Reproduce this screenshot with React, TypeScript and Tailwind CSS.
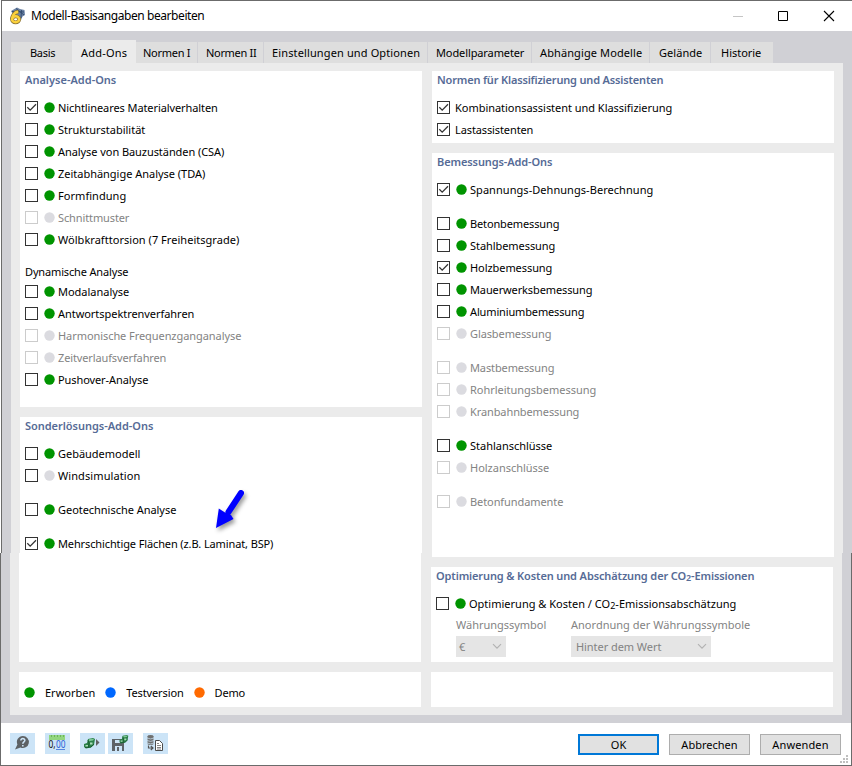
import { useLayoutEffect, useRef, type ReactNode } from "react";

/* Text whose tracking is adjusted so that it fills the given width. */
function T({ w, className = "", children }: { w: number; className?: string; children: ReactNode }) {
  const ref = useRef<HTMLSpanElement>(null);
  useLayoutEffect(() => {
    const el = ref.current;
    if (!el) return;
    el.style.letterSpacing = "0px";
    const n = (el.textContent ?? "").length;
    const natural = el.getBoundingClientRect().width;
    el.style.letterSpacing = `${(w - 0.7 - natural) / n}px`;
  }, [w]);
  return (
    <span ref={ref} className={`inline-block shrink-0 whitespace-nowrap ${className}`}>
      {children}
    </span>
  );
}

function Dot({ color }: { color: string }) {
  return (
    <svg width="11" height="11" viewBox="0 0 11 11" className="block shrink-0">
      <circle cx="5.5" cy="5.5" r="5.2" fill={color} />
    </svg>
  );
}

const GREEN = "#009400";
const GRAY = "#dbdbe0";

type Row = { label: ReactNode; w: number; checked?: boolean; off?: boolean; dot?: string | null; gap?: boolean };

function CheckRow({ label, w, checked, off, dot, gap }: Row) {
  const color = dot === undefined ? (off ? GRAY : GREEN) : dot;
  return (
    <label className={`flex h-[22px] items-start ${gap ? "mt-3" : ""}`}>
      <span
        className={`mt-1 block size-[13px] shrink-0 border bg-white ${off ? "border-[#cccccc]" : "border-[#333333]"}`}
      >
        {checked && (
          <svg width="11" height="11" viewBox="0 0 11 11" className="block">
            <path d="M1.3 5.3 4.2 8.2 10 2.3" fill="none" stroke="#333" strokeWidth="1.3" />
          </svg>
        )}
      </span>
      {color !== null && (
        <span className="mt-[5px] ml-[6px] shrink-0">
          <Dot color={color} />
        </span>
      )}
      <T w={w} className={`leading-[22px] ${color === null ? "ml-[5px]" : "ml-[3px]"} ${off ? "text-[#838383]" : ""}`}>
        {label}
      </T>
    </label>
  );
}

function Panel({ title, w, className, children }: { title: ReactNode; w: number; className: string; children: ReactNode }) {
  return (
    <section className={`w-[402px] bg-white pl-[5px] ${className}`}>
      <h2 className="h-[26px] font-semibold leading-[17px] text-[#566b96]">
        <T w={w}>{title}</T>
      </h2>
      {children}
    </section>
  );
}

const tabs = [
  { label: "Basis", w: 26, box: "w-[61px] pl-[19px]" },
  { label: "Add-Ons", w: 47, box: "w-[64px] pl-[9px]", active: true },
  { label: "Normen I", w: 48, box: "w-[62px] pl-[7px]" },
  { label: "Normen II", w: 51, box: "w-[66px] pl-[8px]" },
  { label: "Einstellungen und Optionen", w: 149, box: "w-[164px] pl-[8px]" },
  { label: "Modellparameter", w: 89, box: "w-[104px] pl-[8px]" },
  { label: "Abhängige Modelle", w: 103, box: "w-[118px] pl-[8px]" },
  { label: "Gelände", w: 44, box: "w-[61px] pl-[9px]" },
  { label: "Historie", w: 41, box: "w-[62px] pl-[10px]" },
];

const analysis: Row[] = [
  { label: "Nichtlineares Materialverhalten", w: 160.5, checked: true },
  { label: "Strukturstabilität", w: 88 },
  { label: "Analyse von Bauzuständen (CSA)", w: 167 },
  { label: "Zeitabhängige Analyse (TDA)", w: 148 },
  { label: "Formfindung", w: 69 },
  { label: "Schnittmuster", w: 72, off: true },
  { label: "Wölbkrafttorsion (7 Freiheitsgrade)", w: 182 },
];
const dynamic: Row[] = [
  { label: "Modalanalyse", w: 72 },
  { label: "Antwortspektrenverfahren", w: 137 },
  { label: "Harmonische Frequenzganganalyse", w: 184, off: true },
  { label: "Zeitverlaufsverfahren", w: 109, off: true },
  { label: "Pushover-Analyse", w: 91 },
];
const special: Row[] = [
  { label: "Gebäudemodell", w: 83 },
  { label: "Windsimulation", w: 83, dot: GRAY },
  { label: "Geotechnische Analyse", w: 119, gap: true },
  { label: "Mehrschichtige Flächen (z.B. Laminat, BSP)", w: 216, checked: true, gap: true },
];
const design: Row[] = [
  { label: "Spannungs-Dehnungs-Berechnung", w: 184, checked: true },
  { label: "Betonbemessung", w: 90, gap: true },
  { label: "Stahlbemessung", w: 86 },
  { label: "Holzbemessung", w: 83, checked: true },
  { label: "Mauerwerksbemessung", w: 123 },
  { label: "Aluminiumbemessung", w: 115 },
  { label: "Glasbemessung", w: 82, off: true },
  { label: "Mastbemessung", w: 85, off: true, gap: true },
  { label: "Rohrleitungsbemessung", w: 127, off: true },
  { label: "Kranbahnbemessung", w: 110, off: true },
  { label: "Stahlanschlüsse", w: 83, gap: true },
  { label: "Holzanschlüsse", w: 80, off: true },
  { label: "Betonfundamente", w: 94, off: true, gap: true },
];

const rows = (list: Row[]) => list.map((r, i) => <CheckRow key={i} {...r} />);
const co2 = (
  <>
    CO<span className="relative top-px text-[9px]">2</span>
  </>
);

function Select({ w, box, children }: { w: number; box: string; children: ReactNode }) {
  return (
    <div className={`flex h-[21px] items-center justify-between bg-[#e5e5e5] pr-[4px] text-[#838383] ${box}`}>
      <T w={w} className="pt-px">{children}</T>
      <svg width="10" height="7" viewBox="0 0 10 7">
        <path d="M1 1.2 5 5.2 9 1.2" fill="none" stroke="#b3b3b3" strokeWidth="1.2" />
      </svg>
    </div>
  );
}

function IconButton({ className = "", children }: { className?: string; children: ReactNode }) {
  return (
    <button className={`h-[21px] w-[25px] bg-[#cce4f7] ${className}`}>
      <svg width="25" height="21" viewBox="0 0 25 21" className="block">
        {children}
      </svg>
    </button>
  );
}

function GreenPart() {
  return (
    <>
      <path d="M0 6 3 5 4 1 9 0 11 1 10 7 7 9.5 2 10.5 0 9Z" fill="#2c8049" />
      <path d="M4.5 2 6 .8 10 1 9 2.5 5 3.2Z" fill="#7cc795" />
      <path d="M1.5 7H4V8.5H1.5ZM6 4.5H8.5V6.5H6Z" fill="#a9dcb9" />
      <path d="M4 2 5 5 4.5 9.5M1 9.6 7 9 10 6" fill="none" stroke="#165b2e" strokeWidth=".9" />
    </>
  );
}

export default function App() {
  return (
    <div className="relative h-[766px] w-[852px] overflow-hidden bg-[#d0d0d5] font-['Noto_Sans','Open_Sans',sans-serif] text-[11px] text-black">
      <header className="flex h-[31px] items-center border-t border-[#6b6b6b] bg-white">
        <svg width="17" height="18" viewBox="0 0 17 18" className="ml-[9px]">
          <path d="M2 4 8 .5 11 2 15.5 3 16 8 13.5 9.5 12 13 5 9Z" fill="#6c83a5" />
          <path d="M3 4.5 15 5M7 1.5 15 8M12.5 3 12 11" stroke="#2f486c" strokeWidth=".9" fill="none" />
          <path d="M9.5 4.8C5.5 5 3.2 8.4 3.2 12.2" fill="none" stroke="#8a7334" strokeWidth="4" />
          <ellipse cx="6.6" cy="12.3" rx="3.6" ry="3" fill="none" stroke="#8a7334" strokeWidth="3.8" />
          <path d="M9.2 4.9C5.5 5.2 3.2 8.4 3.2 12.2" fill="none" stroke="#fbd13c" strokeWidth="2.6" />
          <ellipse cx="6.6" cy="12.3" rx="3.6" ry="3" fill="none" stroke="#fbd13c" strokeWidth="2.4" />
        </svg>
        <T w={174} className="ml-[5px] text-[12px]">Modell-Basisangaben bearbeiten</T>
        <svg width="102" height="12" viewBox="0 0 102 12" className="mr-[17px] ml-auto">
          <path d="M0 6.5H10" stroke="#c5c5c5" />
          <path d="M45.5 1.5h9v9h-9z" fill="none" stroke="#000" />
          <path d="M91 1 101 11M101 1 91 11" stroke="#000" strokeWidth="1.1" />
        </svg>
      </header>

      <nav className="flex h-[32px] items-end pl-[11px] pt-[9px]">
        {tabs.map((t, i) => (
          <div
            key={t.label}
            className={`leading-[22px] ${t.box} ${
              t.active
                ? "h-[23px] bg-[#ebebeb] pt-[2px]"
                : i > 1 && i < 8
                  ? "h-[21px] border-r border-[#d0d0d5] bg-[#dedede]"
                  : "h-[21px] bg-[#dedede]"
            }`}
          >
            <T w={t.w}>{t.label}</T>
          </div>
        ))}
      </nav>

      <main className="ml-[11px] flex h-[652px] w-[832px] gap-[10px] bg-[#ebebeb] pl-[9px] pt-[8px]">
        <div className="flex flex-col gap-[10px]">
          <Panel title="Analyse-Add-Ons" w={92} className="h-[336px]">
            {rows(analysis)}
            <div className="h-[30px] pt-[10px] leading-[22px]">
              <T w={104}>Dynamische Analyse</T>
            </div>
            {rows(dynamic)}
          </Panel>
          <Panel title="Sonderlösungs-Add-Ons" w={129} className="h-[245px]">
            {rows(special)}
          </Panel>
          <section className="-ml-px flex h-[35px] w-[402px] items-center bg-white pt-[6px] pl-[5px]">
            <Dot color={GREEN} />
            <T w={51} className="ml-[10px] pt-px">Erworben</T>
            <span className="ml-[10px]"><Dot color="#0068ff" /></span>
            <T w={58} className="ml-[10px] pt-px">Testversion</T>
            <span className="ml-[10px]"><Dot color="#ff6a00" /></span>
            <T w={31} className="ml-[10px] pt-px">Demo</T>
          </section>
        </div>
        <div className="flex flex-col gap-[10px]">
          <Panel title="Normen für Klassifizierung und Assistenten" w={227} className="h-[72px]">
            <CheckRow label="Kombinationsassistent und Klassifizierung" w={218} checked dot={null} />
            <CheckRow label="Lastassistenten" w={79} checked dot={null} />
          </Panel>
          <Panel title="Bemessungs-Add-Ons" w={116} className="h-[404px]">
            {rows(design)}
          </Panel>
          <Panel title={<>Optimierung &amp; Kosten und Abschätzung der {co2}-Emissionen</>} w={319} className="-ml-px h-[95px]">
            <CheckRow label={<>Optimierung &amp; Kosten / {co2}-Emissionsabschätzung</>} w={268} />
            <div className="flex gap-[65px] pl-[20px]">
              <div className="w-[50px]">
                <div className="h-[21px] leading-[19px] text-[#838383]"><T w={91}>Währungssymbol</T></div>
                <Select w={6} box="w-[50px] pl-[3px]">€</Select>
              </div>
              <div>
                <div className="h-[21px] leading-[19px] text-[#838383]"><T w={180}>Anordnung der Währungssymbole</T></div>
                <Select w={86} box="w-[140px] pl-[5px]">Hinter dem Wert</Select>
              </div>
            </div>
          </Panel>
          <section className="-ml-px h-[35px] w-[402px] bg-white" />
        </div>
      </main>

      <footer className="mt-[8px] flex h-[43px] items-start border-b border-[#6b6b6b] bg-white pt-[10px] pl-[10px]">
        <IconButton>
          <path d="M12.8 3a6 6 0 1 1-2.3 11.5L5 16.5 7.4 11.5A6 6 0 0 1 12.8 3Z" fill="#5e6265" />
          <path d="M10.8 7.6C10.8 4.8 15 5 14.8 7.5 14.6 8.9 12.8 9 12.8 10.8M12.8 12V13.6" fill="none" stroke="#cce4f7" strokeWidth="1.6" />
        </IconButton>
        <IconButton className="ml-[10px]">
          <path d="M4 2h16v5H4z" fill="#92d67f" />
          <path d="M6.5 2v2M9.5 2v2M12.5 2v2M15.5 2v2M18.5 2v2" stroke="#6cb35c" />
          <text x="3.5" y="15.3" fontSize="10" fontFamily="Noto Sans" fill="#111" textLength="7" lengthAdjust="spacingAndGlyphs">0,</text>
          <text x="11" y="15.3" fontSize="10" fontFamily="Noto Sans" fill="#2860d8" textLength="9.5" lengthAdjust="spacingAndGlyphs">00</text>
          <path d="M11 16.5h9" stroke="#5785df" />
        </IconButton>
        <IconButton className="ml-[10px]">
          <g transform="translate(4 5)"><GreenPart /></g>
          <path d="M16 6 19.5 9.5 16 13Z" fill="#626262" />
        </IconButton>
        <IconButton className="ml-[3px]">
          <path d="M4 6H14L16 8V18H4Z" fill="#5d6267" />
          <path d="M7 7h5v3H7zM7 13h7v5H7z" fill="#cce4f7" />
          <path d="M9 14h2v4H9z" fill="#5d6267" />
          <g transform="translate(11.5 2) scale(.8)"><GreenPart /></g>
        </IconButton>
        <IconButton className="ml-[10px]">
          <path d="M4.5 3.2Q4.5 2 7.5 2T10.5 3.2V11Q10.5 12 7.5 12T4.5 11Z" fill="#707070" />
          <path d="M4 5Q7.5 6.8 11 5M4 7.5Q7.5 9.3 11 7.5M4 10Q7.5 11.8 11 10" fill="none" stroke="#cce4f7" strokeWidth=".7" />
          <path d="M5.5 12.5V15H9.5M7.8 13 10 15 7.8 17" fill="none" stroke="#555" strokeWidth="1.2" />
          <path d="M12.5 7.5h4l3 3v7h-7z" fill="#fff" stroke="#4b4b4b" />
          <path d="M14 10.5h2M14 12.5h4M14 14.5h4M14 16h4" stroke="#666" strokeWidth=".8" />
        </IconButton>
        <div className="mt-px mr-[11px] ml-auto flex gap-[10px]">
          <button className="h-[21px] w-[81px] border-2 border-[#0078d7] bg-[#e1e1e1] leading-[18px]"><T w={16}>OK</T></button>
          <button className="h-[21px] w-[81px] border border-[#adadad] bg-[#e1e1e1] leading-[20px]"><T w={57}>Abbrechen</T></button>
          <button className="h-[21px] w-[81px] border border-[#adadad] bg-[#e1e1e1] leading-[20px]"><T w={57}>Anwenden</T></button>
        </div>
      </footer>

      {/* Pointer laid over the special solutions list */}
      <svg width="36" height="46" viewBox="0 0 36 46" className="absolute top-[487px] left-[212px] drop-shadow-[2px_3px_2px_rgba(0,0,0,0.4)]">
        <path d="M29 6 16.5 25" stroke="#0000ff" strokeWidth="6" strokeLinecap="round" />
        <path d="M4 41 6.8 21.5 13 25.5 19 28 21.5 32Z" fill="#0000ff" />
      </svg>

      {/* Window outline and size grip */}
      <i className="absolute top-0 left-0 h-[553px] w-px bg-white" />
      <i className="absolute top-0 left-px h-[553px] w-px bg-[#6b6b6b]" />
      <i className="absolute top-[553px] left-0 h-[213px] w-px bg-[#6b6b6b]" />
      <i className="absolute top-[553px] right-0 h-[213px] w-px bg-[#6b6b6b]" />
      <i className="absolute top-[553px] left-[10px] h-[162px] w-px bg-[#ebebeb]" />
      <i className="absolute top-[553px] left-[842px] h-[162px] w-px bg-[#d0d0d5]" />
      <i className="absolute top-[553px] left-[19px] h-[109px] w-px bg-white" />
      <i className="absolute top-[553px] left-[421px] h-[109px] w-px bg-[#ebebeb]" />
      <svg width="8" height="8" viewBox="0 0 8 8" className="absolute right-[4px] bottom-[3px]">
        <path d="M6 0h2v2H6zM3 3h2v2H3zM6 3h2v2H6zM0 6h2v2H0zM3 6h2v2H3zM6 6h2v2H6z" fill="#bfbfbf" />
      </svg>
    </div>
  );
}
